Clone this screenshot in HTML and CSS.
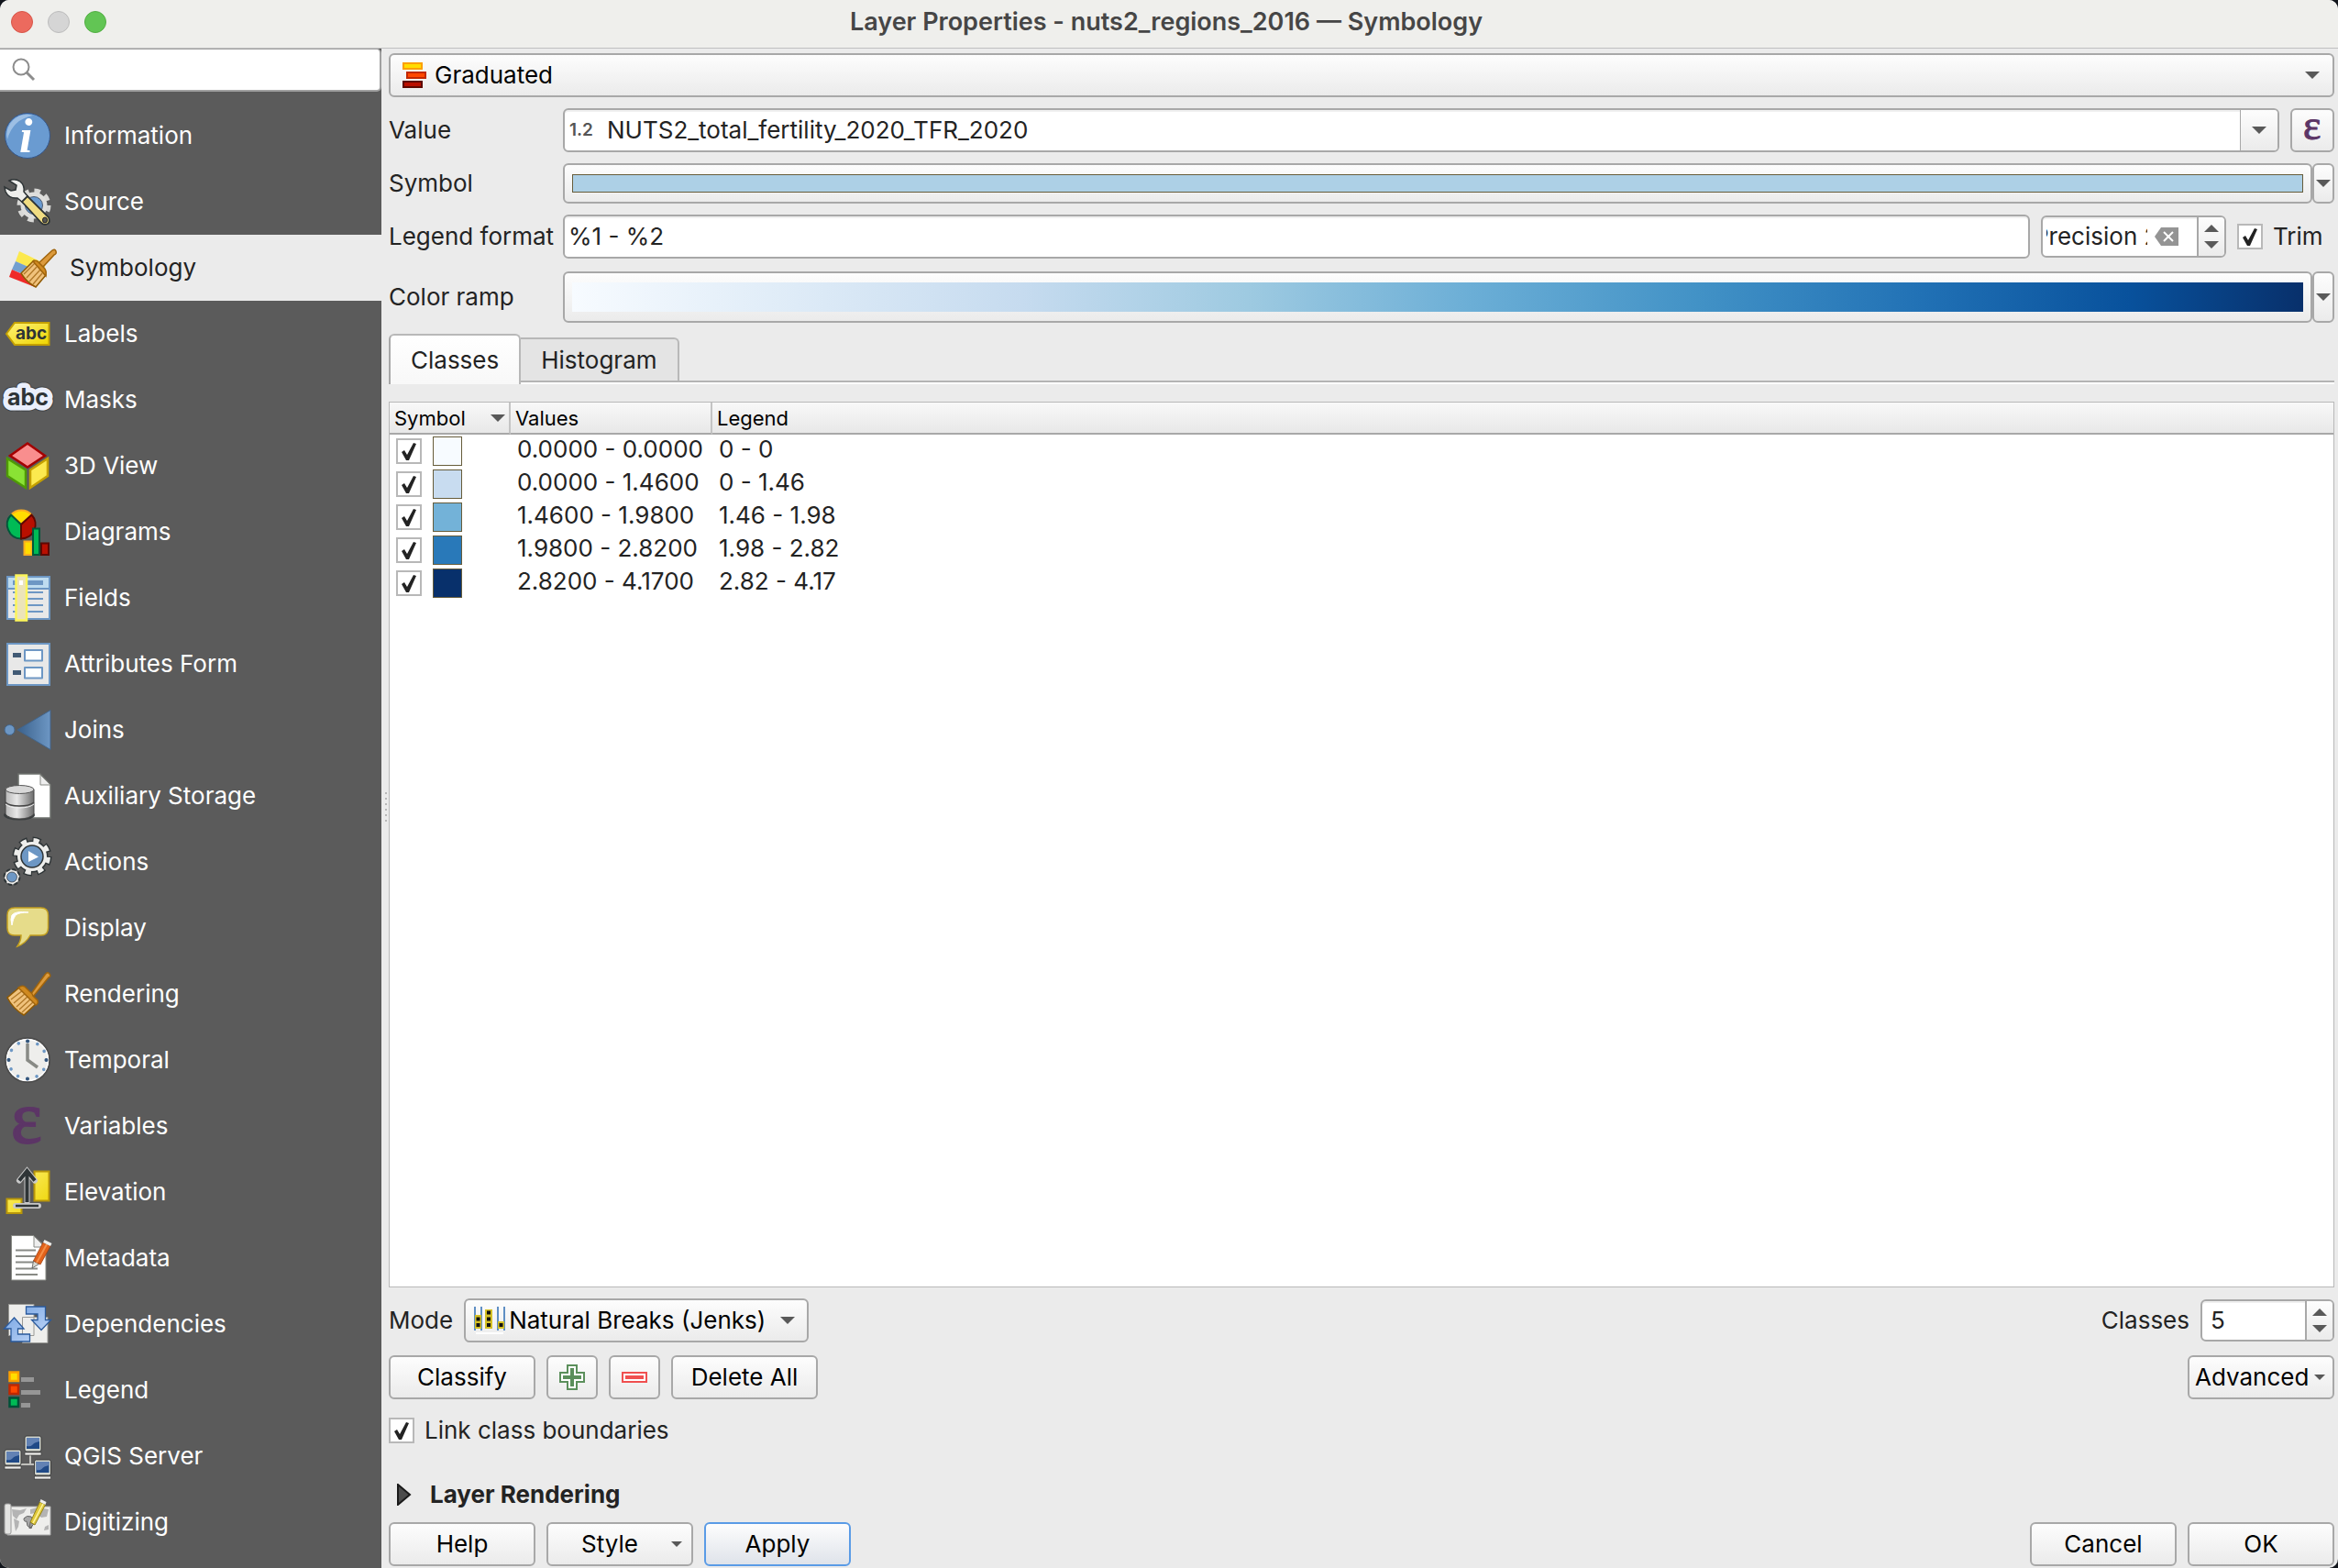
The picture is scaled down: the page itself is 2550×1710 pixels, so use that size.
FILE: index.html
```html
<!DOCTYPE html>
<html lang="en">
<head>
   <meta charset="utf-8">
   <title>Layer Properties - nuts2_regions_2016 — Symbology</title>
   <link rel="stylesheet" href="styles.css">
</head>
<body>

<!-- Shared shapes -->
<svg class="defs" aria-hidden="true">
   <defs>
      <symbol id="down" viewBox="0 0 16 8"><path d="M0 0h16L8 8z" fill="#595959"/></symbol>
      <symbol id="up" viewBox="0 0 16 8"><path d="M0 8h16L8 0z" fill="#595959"/></symbol>
      <symbol id="brush" viewBox="0 0 56 56">
         <path d="M19 21L6 32Q12 44 24 51L38 38z" fill="#f0c27c" stroke="#8f5902" stroke-width="1.5"/>
         <path d="M10 34l13-10M13 38l13-11M16 42l13-12M19 45l13-12M22 48l13-12" stroke="#b07828" stroke-width="1.3"/>
         <path d="M31 29L47 7Q50 3 52 6T51 10L34 31z" fill="#dc9a3c" stroke="#a0640c" stroke-width="1.5"/>
         <path d="M18 21q4-3 7-1l5 5q3 2 4 5l5 5q1 4-2 5z" fill="#d08a20" stroke="#a0640c" stroke-width="1.5"/>
      </symbol>
      <symbol id="monitor" viewBox="0 0 20 23">
         <rect x="1" y="1" width="18" height="17" rx="2" fill="#d3d7cf" stroke="#3c3c3c"/>
         <rect x="3" y="3" width="14" height="12" fill="#204a87"/>
         <path d="M3 3h14v4q-6 1-8 4-2 2-6 1z" fill="#6282b4"/>
         <rect x="1" y="19" width="18" height="3" fill="#eeeeec" stroke="#3c3c3c" stroke-width=".7"/>
      </symbol>
      <linearGradient id="gold" x1="0" y1="0" x2="1" y2="1"><stop offset="0" stop-color="#fff27a"/><stop offset="1" stop-color="#edd400"/></linearGradient>
      <linearGradient id="metal"><stop offset="0" stop-color="#b8b8b8"/><stop offset=".4" stop-color="#e8e8e8"/><stop offset="1" stop-color="#6c6c6c"/></linearGradient>
      <linearGradient id="steel"><stop offset="0" stop-color="#3a618c"/><stop offset="1" stop-color="#6d97c4"/></linearGradient>
      <linearGradient id="sky" x1="0" y1="0" x2="1" y2="1"><stop offset="0" stop-color="#6f9fe0"/><stop offset="1" stop-color="#c8dcfa"/></linearGradient>
   </defs>
</svg>

<div class="window">

<header class="titlebar">
   <div class="lights">
      <button type="button" class="light close" aria-label="Close"></button>
      <button type="button" class="light minimise" aria-label="Minimise"></button>
      <button type="button" class="light zoom" aria-label="Zoom"></button>
   </div>
   <h1 class="title">Layer Properties - nuts2_regions_2016 — Symbology</h1>
</header>

<div class="content">

<nav class="sidebar">
   <div class="search">
      <svg width="28" height="28" viewBox="0 0 28 28"><circle cx="11" cy="11" r="8.5" fill="none" stroke="#8c8c8c" stroke-width="2"/><path d="M17 17l8 8" stroke="#8c8c8c" stroke-width="3"/></svg>
      <input type="text" aria-label="Search">
   </div>
   <ul class="menu">
      <li><a href="#information">
         <svg class="icon" viewBox="0 0 56 56"><circle cx="28" cy="28" r="24.5" fill="#6a9bd1" stroke="#34578c"/><path d="M6 32A22 22 0 0 1 34 6Q12 10 6 32z" fill="#9dbfe4"/><text x="19" y="46" class="glyph-i">i</text></svg>
         Information</a></li>
      <li><a href="#source">
         <svg class="icon" viewBox="0 0 56 56">
            <circle cx="35" cy="32" r="16" fill="none" stroke="#d8d8d6" stroke-width="5" stroke-dasharray="6.6 5.96"/>
            <circle cx="35" cy="32" r="12" fill="#6a9bd1" stroke="#dededc" stroke-width="5"/><circle cx="35" cy="32" r="9.5" fill="none" stroke="#4a5a70"/>
            <path d="M8 5Q14 2 20 6q5 4 4 11l5 6-6 6-6-5Q8 25 4 17l-1-5 7 4 5-1 1-5z" fill="#eeeeec" stroke="#2e3436" stroke-width="1.5"/>
            <path d="M22 28l6-6 23 23q2 5-1 7-4 2-7-1z" fill="#f0dc82" stroke="#2e3436" stroke-width="1.8"/><ellipse cx="47" cy="48" rx="2.5" ry="3" fill="#555" stroke="#222"/>
         </svg>
         Source</a></li>
      <li><a href="#symbology" class="selected" aria-current="page">
         <svg class="icon" viewBox="0 0 56 56">
            <path d="M13 10L42 24 38 34 9 21z" fill="#fce94f"/><path d="M9 21l30 13-4 8L5 30z" fill="#729fcf"/><path d="M5 30l28 12-3 7L2 38z" fill="#ef2929"/>
            <path d="M29 20L15 34Q21 44 31 49L42 36z" fill="#f0c27c" stroke="#8f5902" stroke-width="1.5"/>
            <path d="M18 35l12-12M21 39l11-12M24 43l12-13M28 46l10-12" stroke="#b07828" stroke-width="1.3"/>
            <path d="M34 23L49 9Q52 7 53 10T51 14L38 28z" fill="#dc9a3c" stroke="#a0640c" stroke-width="1.5"/>
            <path d="M28 21q4-2 6 1l6 6q3 3 2 9z" fill="#d08a20" stroke="#a0640c" stroke-width="1.5"/>
         </svg>
         Symbology</a></li>
      <li><a href="#labels">
         <svg class="icon" viewBox="0 0 56 56"><path d="M5 28l9-12h37.500v24H14z" fill="url(#gold)" stroke="#c4a000" stroke-width="2"/><text x="15" y="34" class="abc" font-size="19">abc</text></svg>
         Labels</a></li>
      <li><a href="#masks">
         <svg class="icon" viewBox="0 0 56 56"><text x="6" y="34" font-size="25" class="abc halo-line">abc</text><text x="6" y="34" font-size="25" class="abc halo">abc</text></svg>
         Masks</a></li>
      <li><a href="#view3d">
         <svg class="icon" viewBox="0 0 56 56" stroke-width="2.500"><path d="M28 3.500l19 13.500-19 12.500L9 17z" fill="#f98e8e" stroke="#a40000"/><path d="M6 20l20 12.500v19.500L6 39z" fill="#8ae234" stroke="#4e9a06"/><path d="M31 32.500L50 20v19L31 52z" fill="#fce94f" stroke="#c4a000"/></svg>
         3D View</a></li>
      <li><a href="#diagrams">
         <svg class="icon" viewBox="0 0 56 56" stroke-width="2">
            <path d="M21 20L10 9.500a15 15 0 0 1 22.500 0z" fill="#ffdd00" stroke="#fcaf1e"/>
            <path d="M21 20v15.500A15.500 15.500 0 0 1 10 9.500z" fill="#00bb55" stroke="#00573a"/>
            <path d="M21 20v15.500A15.500 15.500 0 0 0 32.500 9.500z" fill="#b90f00" stroke="#5e0800"/>
            <path d="M24.500 38.500h8v14.500h-8z" fill="#ffdd00" stroke="#fcaf1e"/><path d="M43 40.500h8v12.500h-8z" fill="#b90f00" stroke="#5e0800"/><path d="M34 24.500h7v28.500h-7z" fill="#00bb55" stroke="#00573a"/>
         </svg>
         Diagrams</a></li>
      <li><a href="#fields">
         <svg class="icon" viewBox="0 0 56 56">
            <path d="M6 5h46v46H6z" fill="#e8e8e8" stroke="#6d97c4" stroke-width="2"/><path d="M6 5h46v13H6z" fill="#bfdcf0" stroke="#6d97c4" stroke-width="2"/>
            <path d="M12 9h33v5H12zM12 21h33v2H12zM12 28h33v2H12zM12 35h33v2H12zM12 42h33v2H12z" fill="#6d97c4"/>
            <path d="M15.500 3.500h11.500v49H15.500z" fill="#ece4b8" stroke="#fcf55a" stroke-width="2.500"/><path d="M19 9h4v5h-4z" fill="#fff"/>
         </svg>
         Fields</a></li>
      <li><a href="#form">
         <svg class="icon" viewBox="0 0 56 56"><path d="M6 6h46v45H6z" fill="#e8e8e8" stroke="#6d97c4" stroke-width="2"/><path d="M12 16h9v5h-9zM12 35h9v5h-9z" fill="#415a75"/><path d="M25 13h19v11.500H25zM25 32h19v11.500H25z" fill="#fcffff" stroke="#6d97c4" stroke-width="2" stroke-linejoin="round"/></svg>
         Attributes Form</a></li>
      <li><a href="#joins">
         <svg class="icon" viewBox="0 0 56 56"><circle cx="8.500" cy="28" r="5.500" fill="#6d97c4" stroke="#42658c"/><path d="M17 28L53 6.500v43z" fill="url(#steel)" stroke="#42658c"/></svg>
         Joins</a></li>
      <li><a href="#storage">
         <svg class="icon" viewBox="0 0 56 56">
            <path d="M18 4h24l11 12v36H18z" fill="#fff" stroke="#6e716d" stroke-width="1.500"/><path d="M42 5v11h11z" fill="#eee" stroke="#888a85"/>
            <ellipse cx="19" cy="49" rx="17" ry="5.500" fill="#3a3e3f"/>
            <path d="M4 21v27q4 5 15 5t16-5V21z" fill="url(#metal)" stroke="#444"/><ellipse cx="19.500" cy="21" rx="15.500" ry="4.500" fill="#d8d8d8" stroke="#555"/>
            <path d="M4 35q4 4 15 4t16-4" fill="none" stroke="#444" stroke-width="1.500"/><path d="M4 37q4 4 15 4t16-4" fill="none" stroke="#eee"/>
         </svg>
         Auxiliary Storage</a></li>
      <li><a href="#actions">
         <svg class="icon" viewBox="0 0 56 56">
            <circle cx="33" cy="22" r="18" fill="none" stroke="#2e3436" stroke-width="7" stroke-dasharray="8.600 5.540"/>
            <circle cx="33" cy="22" r="17.500" fill="#2e3436"/><circle cx="33" cy="22" r="17.500" fill="none" stroke="#eeeeec" stroke-width="5" stroke-dasharray="6.200 7.540" stroke-dashoffset="-1"/>
            <circle cx="33" cy="22" r="16" fill="#eeeeec"/><circle cx="33" cy="22" r="12" fill="#6d97c4" stroke="#2e3436" stroke-width="1.500"/><path d="M29 16l11 6.500L29 28z" fill="#fff"/>
            <circle cx="11" cy="44.500" r="8" fill="#eeeeec" stroke="#2e3436" stroke-width="3" stroke-dasharray="4 2.280"/><circle cx="11" cy="44.500" r="7.500" fill="#eeeeec"/><circle cx="11" cy="44.500" r="5.500" fill="#6d97c4" stroke="#333" stroke-width=".7"/>
         </svg>
         Actions</a></li>
      <li><a href="#display">
         <svg class="icon" viewBox="0 0 56 56"><path d="M14 6h28.500q8 0 8 8v14q0 8-8 8H31Q26 45 17 48q4-6 4-12h-7q-8 0-8-8V14q0-8 8-8z" fill="#e6dc8a" stroke="#c4a020" stroke-width="1.500"/><path d="M11 25q-2-7 0-11 4-5 18-3-10 0-14 3-3 4-4 11z" fill="#fff" stroke="#fff"/></svg>
         Display</a></li>
      <li><a href="#rendering">
         <svg class="icon"><use href="#brush"/></svg>
         Rendering</a></li>
      <li><a href="#temporal">
         <svg class="icon" viewBox="0 0 56 56">
            <circle cx="28" cy="28" r="24" fill="#eeeeec" stroke="#4c4c4c" stroke-width="2"/><circle cx="28" cy="28" r="22.500" fill="none" stroke="#fff" stroke-width="1.500"/>
            <circle cx="28" cy="28" r="20.500" fill="none" stroke="#6d97c4" stroke-width="3.600" stroke-linecap="round" stroke-dasharray=".01 10.724"/>
            <g fill="#34567c"><circle cx="28" cy="7.500" r="2"/><circle cx="28" cy="48.500" r="2"/><circle cx="7.500" cy="28" r="2"/><circle cx="48.500" cy="28" r="2"/></g>
            <path d="M28 10v18l11 8" fill="none" stroke="#888a85" stroke-width="3.500"/>
         </svg>
         Temporal</a></li>
      <li><a href="#variables">
         <svg class="icon" viewBox="0 0 56 56"><text x="10" y="46" class="epsilon" font-size="80" stroke-width="2">ε</text></svg>
         Variables</a></li>
      <li><a href="#elevation">
         <svg class="icon" viewBox="0 0 56 56">
            <path d="M35.500 5.500h16v32h-16zM5.500 35.500h16v15.500h-16z" fill="url(#gold)" stroke="#b8960a" stroke-width="2"/>
            <path d="M27.500 39V7M19 15.500L27.500 5l8.500 10.500M15 43h25" fill="none" stroke="#c8c8c8" stroke-width="6" stroke-linecap="round"/>
            <path d="M27.500 39V7M19 15.500L27.500 5l8.500 10.500" fill="none" stroke="#2e3436" stroke-width="4"/><path d="M15 43h25" stroke="#2e3436" stroke-width="2.500"/>
         </svg>
         Elevation</a></li>
      <li><a href="#metadata">
         <svg class="icon" viewBox="0 0 56 56">
            <path d="M10.500 3.500h24L48 16v36H10.500z" fill="#fff" stroke="#888a85"/><path d="M35 4v12h12z" fill="#eee" stroke="#888a85"/>
            <path d="M15 19.500h22M15 26h22M15 32.500h20M15 39.500h24M15 46h24" stroke="#888a85" stroke-width="2"/>
            <path d="M33 39l1.500-8 6 3.500z" fill="#d8d8d0" stroke="#555" stroke-width=".8"/><path d="M34.500 31L45 11l8 4-11 20z" fill="#e2621b" stroke="#a04010" stroke-width=".8"/><path d="M38 33l11-20" stroke="#f5904a" stroke-width="2"/><path d="M45 11l1.500-3 8 4-1.500 3z" fill="#eeeeec"/>
         </svg>
         Metadata</a></li>
      <li><a href="#dependencies">
         <svg class="icon" viewBox="0 0 56 56" stroke="#9a9a96">
            <path d="M7.500 6.500H35v34H7.500zM22.500 20.500H50v28H22.500z" fill="#eeeeec"/>
            <path d="M26.500 9h21v14.500h6L43 34.500l-10.500-11H39V17H26.500zM13.500 21L24 33h-6.500v6h13v8H10V33H2.500z" fill="url(#sky)" stroke="#2a5a9c" stroke-width="1.300"/>
         </svg>
         Dependencies</a></li>
      <li><a href="#legend">
         <svg class="icon" viewBox="0 0 56 56" stroke-width="2.500"><path d="M8.500 8.500h9.500v9.500H8.500z" fill="#ffdd00" stroke="#fca000"/><path d="M8.500 22.500h9.500v9.500H8.500z" fill="#ff4800" stroke="#c02800"/><path d="M8.500 36.500h9.500v9.500H8.500z" fill="#00bb55" stroke="#005038"/><path d="M21 14h14v5H21zM21 28h21v5H21zM21 42h10v5H21z" fill="#969696"/></svg>
         Legend</a></li>
      <li><a href="#server">
         <svg class="icon" viewBox="0 0 56 56"><path d="M31 27v10M20 37h16" stroke="#c0c0bc" stroke-width="2"/><use href="#monitor" x="24" y="5" width="20" height="23"/><use href="#monitor" x="2" y="20" width="20" height="23"/><use href="#monitor" x="34.500" y="31" width="20" height="23"/></svg>
         QGIS Server</a></li>
      <li><a href="#digitizing">
         <svg class="icon" viewBox="0 0 56 56">
            <path d="M6 11h47v31H6z" fill="#eeeeec" stroke="#a8a8a8"/><rect x="3" y="8" width="7" height="33" rx="2" fill="#e4e4e2" stroke="#9a9a9a"/>
            <path d="M11 14l9 1 7-2-3 5-5 2-3 5-4-4zM13 24l6 3-1 6-3 5-1-6zM31 14l8-2 12 2-2 8-6 1-6-5-6 1zM47 33l4-2v5l-5 1z" fill="#b4b4b4"/>
            <path d="M24 24q3-4 8-2l3 5-3 8-4-3-1-5q-3 1-3-3z" fill="#a8a8a8" stroke="#666"/>
            <path d="M30 35l1-7 4 2z" fill="#999" stroke="#555" stroke-width=".7"/><path d="M31 28L41.500 6l6 3L36 31z" fill="#e0c93c" stroke="#8a7a14" stroke-width=".9"/><path d="M34 29L45 8" stroke="#fff6a0" stroke-width="1.500"/><path d="M41.500 6l1-3 6 3-1 3z" fill="#eee"/>
         </svg>
         Digitizing</a></li>
   </ul>
</nav>

<div class="splitter"></div>

<main class="main">

   <div class="box face">
      <svg width="28" height="28" viewBox="0 0 28 28" stroke-width="2"><path d="M2 1h20v6H2z" fill="#ffdd00" stroke="#fca000"/><path d="M6 11h20v6H6z" fill="#ff4800" stroke="#c02800"/><path d="M2 21h20v6H2z" fill="#b90f00" stroke="#5e0800"/></svg>
      <select class="pick" aria-label="Renderer"><option>Graduated</option></select>
      <svg class="arrow"><use href="#down"/></svg>
   </div>

   <div class="row">
      <label class="name" for="value">Value</label>
      <div class="box field">
         <span class="type">1.2</span>
         <input type="text" id="value" value="NUTS2_total_fertility_2020_TFR_2020">
         <button type="button" class="drop face" aria-label="Choose field"><svg class="arrow"><use href="#down"/></svg></button>
      </div>
      <button type="button" class="box face square" aria-label="Expression"><svg class="expression" width="32" height="32" viewBox="0 0 32 32"><text x="6" y="26" class="epsilon" font-size="46" stroke-width="1">ε</text></svg></button>
   </div>

   <div class="row">
      <span class="name">Symbol</span>
      <div class="split">
         <button type="button" class="box face wide symbol" aria-label="Symbol"><span class="fill"></span></button>
         <button type="button" class="box face narrow" aria-label="Symbol menu"><svg class="arrow"><use href="#down"/></svg></button>
      </div>
   </div>

   <div class="row">
      <label class="name" for="format">Legend format</label>
      <div class="box field"><input type="text" id="format" value="%1 - %2"></div>
      <div class="box spin precision">
         <input type="text" value="Precision 2" aria-label="Precision">
         <button type="button" class="clear" aria-label="Clear"><svg width="26" height="20" viewBox="0 0 26 20"><path d="M0 10L7 0h19v20H7z" fill="#949494"/><path d="M10 5l10 10M20 5L10 15" stroke="#fff" stroke-width="2"/></svg></button>
         <div class="steps face">
            <button type="button" aria-label="More"><svg class="arrow"><use href="#up"/></svg></button>
            <button type="button" aria-label="Less"><svg class="arrow"><use href="#down"/></svg></button>
         </div>
      </div>
      <label class="check trim"><input type="checkbox" checked>Trim</label>
   </div>

   <div class="row ramp-row">
      <span class="name">Color ramp</span>
      <div class="split">
         <button type="button" class="box face wide" aria-label="Color ramp"><span class="ramp"></span></button>
         <button type="button" class="box face narrow" aria-label="Color ramp menu"><svg class="arrow"><use href="#down"/></svg></button>
      </div>
   </div>

   <div class="tabs" role="tablist">
      <button type="button" class="tab active" role="tab" aria-selected="true">Classes</button>
      <button type="button" class="tab" role="tab" aria-selected="false">Histogram</button>
   </div>

   <div class="tree">
      <table>
         <thead>
            <tr><th class="col-symbol"><div class="sort">Symbol<svg class="arrow"><use href="#down"/></svg></div></th><th class="col-values">Values</th><th>Legend</th></tr>
         </thead>
         <tbody>
            <tr><td><div class="cell"><input type="checkbox" aria-label="0 - 0" checked><span class="swatch c1"></span></div></td><td>0.0000 - 0.0000</td><td>0 - 0</td></tr>
            <tr><td><div class="cell"><input type="checkbox" aria-label="0 - 1.46" checked><span class="swatch c2"></span></div></td><td>0.0000 - 1.4600</td><td>0 - 1.46</td></tr>
            <tr><td><div class="cell"><input type="checkbox" aria-label="1.46 - 1.98" checked><span class="swatch c3"></span></div></td><td>1.4600 - 1.9800</td><td>1.46 - 1.98</td></tr>
            <tr><td><div class="cell"><input type="checkbox" aria-label="1.98 - 2.82" checked><span class="swatch c4"></span></div></td><td>1.9800 - 2.8200</td><td>1.98 - 2.82</td></tr>
            <tr><td><div class="cell"><input type="checkbox" aria-label="2.82 - 4.17" checked><span class="swatch c5"></span></div></td><td>2.8200 - 4.1700</td><td>2.82 - 4.17</td></tr>
         </tbody>
      </table>
   </div>

   <div class="bar mode-bar">
      <label for="mode">Mode</label>
      <div class="box face mode">
         <svg width="34" height="30" viewBox="0 0 34 30">
            <path d="M2 28h30v2H2z" fill="#fff"/>
            <path d="M1 0v26M8 0v26M26 0v26M33 0v26" stroke="#5f8fc4" stroke-width="2"/>
            <path d="M1 9h7v15H1zM12 3h8v21h-8zM26 16h7v8h-7z" fill="#d4c026"/><path d="M2.500 11.500h4v4h-4zM2.500 18h4v4h-4zM14 4.500h4v4h-4zM14 11.500h4v4h-4zM14 18h4v4h-4zM27.500 18h4v4h-4z" fill="#111"/>
         </svg>
         <select class="pick" id="mode"><option>Natural Breaks (Jenks)</option></select>
         <svg class="arrow"><use href="#down"/></svg>
      </div>
      <label class="push" for="classes">Classes</label>
      <div class="box spin count">
         <input type="number" id="classes" value="5">
         <div class="steps face">
            <button type="button" aria-label="More"><svg class="arrow"><use href="#up"/></svg></button>
            <button type="button" aria-label="Less"><svg class="arrow"><use href="#down"/></svg></button>
         </div>
      </div>
   </div>

   <div class="bar">
      <button type="button" class="box face btn">Classify</button>
      <button type="button" class="box face tool" aria-label="Add class"><svg width="28" height="28" viewBox="0 0 28 28"><path d="M9 1h10v8h8v10h-8v8H9v-8H1V9h8z" fill="#fff" stroke="#5b8f5b" stroke-width="2"/><path d="M12 4h4v8h8v4h-8v8h-4v-8H4v-4h8z" fill="#5b8f5b"/></svg></button>
      <button type="button" class="box face tool" aria-label="Delete class"><svg width="28" height="28" viewBox="0 0 28 28"><path d="M1 9h26v10H1z" fill="#fff" stroke="#f05050" stroke-width="2"/><path d="M4 12h20v4H4z" fill="#f05050"/></svg></button>
      <button type="button" class="box face btn">Delete All</button>
      <button type="button" class="box face btn advanced push">Advanced<svg class="arrow small"><use href="#down"/></svg></button>
   </div>

   <label class="check link"><input type="checkbox" checked>Link class boundaries</label>

   <button type="button" class="group"><svg width="16" height="24" viewBox="0 0 16 24"><path d="M1 1v22l13-11z" fill="#4c4c4c" stroke="#1a1a1a" stroke-width="2"/></svg>Layer Rendering</button>

   <div class="bar">
      <button type="button" class="box face btn">Help</button>
      <button type="button" class="box face btn style">Style<svg class="arrow small"><use href="#down"/></svg></button>
      <button type="button" class="box face btn default">Apply</button>
      <button type="button" class="box face btn push">Cancel</button>
      <button type="button" class="box face btn">OK</button>
   </div>

</main>
</div>
</div>

</body>
</html>
```
FILE: styles.css
```css
* {
   box-sizing: border-box;
}

body {
   margin: 0;
   background: #12161c;
   color: #232323;
   font: 26px/30px Inter, "Liberation Sans", sans-serif;
}

button, input, select {
   margin: 0;
   padding: 0;
   border: 0;
   background: none;
   color: inherit;
   font: inherit;
}

svg {
   flex: none;
   display: block;
}

.defs {
   position: absolute;
   width: 0;
   height: 0;
}

.window {
   display: flex;
   flex-direction: column;
   min-height: 100vh;
   border-radius: 10px;
   background: #ebebeb;
   overflow: hidden;
}

/* Title bar */

.titlebar {
   display: grid;
   grid-template-columns: 120px 1fr 126px;
   align-items: center;
   height: 53px;
   padding: 0 12px 4px;
   border-bottom: 1px solid #c0c0c0;
   background: #efefec;
}

.lights {
   display: flex;
   gap: 16px;
}

.light {
   width: 24px;
   height: 24px;
   border: 1px solid #d85548;
   border-radius: 50%;
   background: #ec6a5e;
}

.light.minimise {
   border-color: #bcbcbc;
   background: #d5d5d5;
}

.light.zoom {
   border-color: #52ae43;
   background: #62c554;
}

.title {
   margin: 0;
   color: #464646;
   font-size: 27px;
   font-weight: 600;
   line-height: 30px;
   text-align: center;
}

.content {
   display: flex;
   flex: 1;
}

/* Sidebar */

.sidebar {
   width: 416px;
   background: #5b5b5b;
   color: #fff;
}

.search {
   display: flex;
   align-items: center;
   gap: 8px;
   height: 47px;
   padding: 0 12px;
   border: solid #a0a0a0;
   border-width: 1px 2px 2px 0;
   border-radius: 0 5px 5px 0;
   background: #fff;
   color: #232323;
}

.search input {
   flex: 1;
   min-width: 0;
}

.menu {
   margin: 0;
   padding: 12px 0;
   list-style: none;
}

.menu a {
   display: flex;
   align-items: center;
   gap: 12px;
   height: 72px;
   padding-left: 2px;
   color: #fff;
   text-decoration: none;
}

.menu a.selected {
   padding-left: 8px;
   background: #ebebeb;
   color: #232323;
}

.icon {
   width: 56px;
   height: 56px;
   overflow: visible;
}

.glyph-i {
   fill: #fff;
   font: italic bold 52px "Liberation Serif", serif;
}

.abc {
   fill: #2e3436;
   font-family: Inter, sans-serif;
   font-weight: 700;
}

.halo {
   stroke: #eaeffc;
   stroke-width: 11px;
   stroke-linejoin: round;
   paint-order: stroke;
}

.halo-line {
   stroke: #3a3e42;
   stroke-width: 13px;
   stroke-linejoin: round;
}

.epsilon {
   fill: #5c3566;
   stroke: #5c3566;
   font-family: "Liberation Serif", serif;
}

.splitter {
   align-self: center;
   width: 2px;
   height: 36px;
   margin: 0 2px 0 4px;
   background: repeating-linear-gradient(#b8b8b8 0 2px, transparent 2px 6px);
}

/* Form */

.main {
   display: flex;
   flex: 1;
   flex-direction: column;
   gap: 12px;
   min-width: 0;
   padding: 5px 4px 2px 0;
}

.box {
   display: flex;
   align-items: center;
   height: 48px;
   border: 2px solid #a8a8a8;
   border-radius: 6px;
}

.face {
   background: linear-gradient(#fdfdfd, #ebebeb);
}

.main > .face {
   gap: 8px;
   padding: 0 14px 0 12px;
}

.arrow {
   width: 16px;
   height: 8px;
}

.arrow.small {
   width: 12px;
   height: 6px;
}

.pick {
   flex: 1;
   min-width: 0;
   appearance: none;
   color: #000;
}

.row {
   display: flex;
   align-items: center;
   gap: 12px;
}

.name {
   width: 178px;
   white-space: nowrap;
}

.field {
   flex: 1;
   min-width: 0;
   background: #fff;
   box-shadow: inset 0 2px #f0f0f0;
}

.field input {
   flex: 1;
   min-width: 0;
   padding: 0 4px;
}

.type {
   width: 42px;
   padding-left: 5px;
   color: #555;
   font-size: 19px;
   font-weight: 600;
}

.drop {
   display: flex;
   align-items: center;
   justify-content: center;
   align-self: stretch;
   width: 41px;
   border-left: 1px solid #a8a8a8;
   border-radius: 0 4px 4px 0;
}

.square {
   justify-content: center;
   width: 48px;
}

.expression {
   overflow: visible;
}

.split {
   display: flex;
   flex: 1;
   min-width: 0;
}

.wide {
   flex: 1;
   padding: 0 8px;
}

.narrow {
   justify-content: center;
   width: 24px;
}

.split .box {
   height: 44px;
}

.fill {
   flex: 1;
   height: 20px;
   border: 1px solid #665c3a;
   background: #add0e6;
}

.ramp-row {
   margin-top: 2px;
}

.ramp-row .split .box {
   height: 56px;
}

.ramp {
   flex: 1;
   height: 32px;
   background: linear-gradient(90deg, #f7fbff, #deebf7 13%, #c6dbef 26%, #9ecae1 39%, #6baed6 52%, #4292c6 65%, #2171b5 78%, #08519c 90%, #08306b);
}

.spin {
   height: 46px;
   background: #fff;
   box-shadow: inset 0 2px #f0f0f0;
}

.spin input {
   flex: 1;
   min-width: 0;
   appearance: textfield;
}

.spin input::-webkit-inner-spin-button {
   appearance: none;
}

.precision {
   width: 202px;
   padding-left: 4px;
}

.precision input {
   text-indent: -14px;
}

.precision .clear {
   margin: 0 20px 0 8px;
}

.count {
   width: 146px;
   padding-left: 9px;
}

.steps {
   display: flex;
   flex-direction: column;
   align-items: center;
   align-self: stretch;
   justify-content: center;
   gap: 10px;
   width: 30px;
   border-left: 2px solid #a8a8a8;
   border-radius: 0 4px 4px 0;
}

.check {
   display: flex;
   align-items: center;
   gap: 11px;
}

.trim {
   width: 106px;
}

input[type="checkbox"] {
   width: 28px;
   height: 28px;
   border: 2px solid #b8b8b8;
   appearance: none;
   background: #fff;
}

input[type="checkbox"]:checked::before {
   content: "";
   display: block;
   height: 24px;
   background: #232323;
   clip-path: polygon(4px 13px, 7px 11px, 10px 16px, 17px 3px, 20px 4px, 12px 22px, 9px 22px);
}

/* Tabs */

.tabs {
   display: flex;
   align-items: flex-end;
   height: 53px;
   border-bottom: 2px solid #b4b4b4;
   box-shadow: 0 2px #fff;
}

.tab {
   height: 47px;
   padding: 0 22px;
   border: 2px solid #b8b8b8;
   border-left: 0;
   border-bottom: 0;
   border-radius: 0 6px 0 0;
   background: #e4e4e4;
}

.tab.active {
   height: 55px;
   margin-bottom: -4px;
   border-left: 2px solid #a8a8a8;
   border-radius: 6px 6px 0 0;
   background: linear-gradient(#fff, #f8f8f8);
}

/* Class list */

.tree {
   flex: 1;
   margin-top: 9px;
   border: 1px solid #b8b8b8;
   background: #fff;
}

.tree table {
   width: 100%;
   border-collapse: separate;
   border-spacing: 0;
   table-layout: fixed;
}

.tree th {
   height: 35px;
   padding: 0 4px 0 5px;
   border-right: 2px solid #c4c4c4;
   border-bottom: 2px solid #a8a8a8;
   background: linear-gradient(#f8f8f8, #e8e8e8);
   color: #000;
   font-size: 22px;
   font-weight: 400;
   text-align: left;
}

.tree th:last-child {
   border-right: 0;
}

.tree .col-symbol {
   width: 132px;
}

.tree .col-values {
   width: 220px;
}

.sort {
   display: flex;
   align-items: center;
   justify-content: space-between;
}

.tree td {
   height: 36px;
   padding: 0 0 4px 7px;
   white-space: nowrap;
}

.tree td:first-child {
   padding: 0 0 0 7px;
}

.cell {
   display: flex;
   align-items: center;
   gap: 12px;
}

.swatch {
   width: 32px;
   height: 32px;
   border: 1px solid #665c3a;
}

.c1 { background: #f7fbff; }
.c2 { background: #c8dcf0; }
.c3 { background: #73b2d8; }
.c4 { background: #2979b9; }
.c5 { background: #08306b; }

/* Bottom controls */

.bar {
   display: flex;
   align-items: center;
   gap: 12px;
}

.mode-bar {
   padding-bottom: 2px;
}

.push {
   margin-left: auto;
}

.mode {
   gap: 4px;
   width: 376px;
   padding: 0 13px 0 9px;
}

.btn {
   justify-content: center;
   width: 160px;
   color: #000;
}

.tool {
   justify-content: center;
   width: 56px;
}

.advanced {
   justify-content: space-between;
   padding: 0 8px 0 6px;
}

.style {
   gap: 36px;
   padding-left: 26px;
}

.default {
   border-color: #5a9be6;
   background: linear-gradient(#fdfdfd, #dfe3ea);
}

.link {
   margin-top: 7px;
}

.group {
   display: flex;
   align-items: center;
   gap: 20px;
   margin: 28px 0 3px;
   padding-left: 9px;
   font-weight: 700;
}
```
